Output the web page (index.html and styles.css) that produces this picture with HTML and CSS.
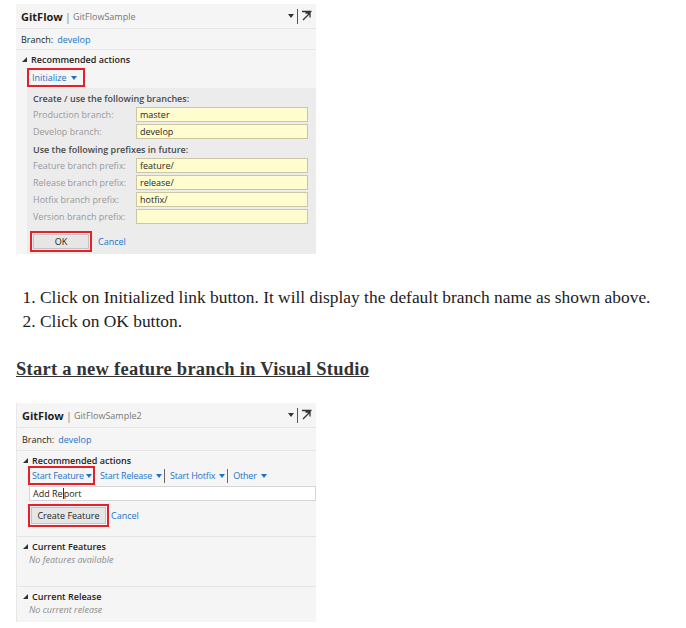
FILE: index.html
```html
<!DOCTYPE html>
<html>
<head>
<meta charset="utf-8">
<title>GitFlow</title>
<link rel="stylesheet" href="styles.css">
</head>
<body>
<div class="panel p1">
  <div class="hdr">
    <span class="title">GitFlow</span><span class="pipe">|</span><span class="repo">GitFlowSample</span>
    <span class="tools">
      <svg class="dd" width="6" height="4" viewBox="0 0 6 4"><polygon points="0,0 6,0 3,4" fill="#333"/></svg>
      <span class="vsep"></span>
      <svg class="pop" width="11" height="11" viewBox="0 0 11 11"><path d="M1 1.5H10.5M2 10L9 3M4.5 3H9V7.5" stroke="#333" stroke-width="1.3" fill="none"/></svg>
    </span>
  </div>
  <div class="branch">Branch:<span class="link bname">develop</span></div>
  <div class="sec-title rec1"><svg class="exp" width="5" height="5" viewBox="0 0 5 5"><polygon points="5,0 5,5 0,5" fill="#333"/></svg>Recommended actions</div>
  <div class="actions">
    <span class="hl init"><span class="link">Initialize</span><svg class="caret" width="6" height="4" viewBox="0 0 6 4"><polygon points="0,0 6,0 3,4" fill="#1e73c6"/></svg></span>
  </div>
  <div class="form">
    <div class="ftitle">Create / use the following branches:</div>
    <div class="frow"><span class="lbl">Production branch:</span><span class="inp">master</span></div>
    <div class="frow"><span class="lbl">Develop branch:</span><span class="inp">develop</span></div>
    <div class="ftitle">Use the following prefixes in future:</div>
    <div class="frow"><span class="lbl">Feature branch prefix:</span><span class="inp">feature/</span></div>
    <div class="frow"><span class="lbl">Release branch prefix:</span><span class="inp">release/</span></div>
    <div class="frow"><span class="lbl">Hotfix branch prefix:</span><span class="inp">hotfix/</span></div>
    <div class="frow"><span class="lbl">Version branch prefix:</span><span class="inp"></span></div>
    <div class="buttons">
      <span class="hl okbox"><span class="btn">OK</span></span>
      <span class="link cancel1">Cancel</span>
    </div>
  </div>
</div>

<ol class="steps">
  <li>Click on Initialized link button. It will display the default branch name as shown above.</li>
  <li>Click on OK button.</li>
</ol>

<h3 class="heading">Start a new feature branch in Visual Studio</h3>

<div class="panel p2">
  <div class="hdr">
    <span class="title">GitFlow</span><span class="pipe">|</span><span class="repo">GitFlowSample2</span>
    <span class="tools">
      <svg class="dd" width="6" height="4" viewBox="0 0 6 4"><polygon points="0,0 6,0 3,4" fill="#333"/></svg>
      <span class="vsep"></span>
      <svg class="pop" width="11" height="11" viewBox="0 0 11 11"><path d="M1 1.5H10.5M2 10L9 3M4.5 3H9V7.5" stroke="#333" stroke-width="1.3" fill="none"/></svg>
    </span>
  </div>
  <div class="branch branch2">Branch:<span class="link bname">develop</span></div>
  <div class="sec-title rec2"><svg class="exp" width="5" height="5" viewBox="0 0 5 5"><polygon points="5,0 5,5 0,5" fill="#333"/></svg>Recommended actions</div>
  <div class="actions2">
    <span class="hl sf"><span class="link">Start Feature</span><svg class="caret" width="6" height="4" viewBox="0 0 6 4"><polygon points="0,0 6,0 3,4" fill="#1e73c6"/></svg></span>
    <span class="act"><span class="link">Start Release</span><svg class="caret" width="6" height="4" viewBox="0 0 6 4"><polygon points="0,0 6,0 3,4" fill="#1e73c6"/></svg></span>
    <span class="asep"></span>
    <span class="act"><span class="link">Start Hotfix</span><svg class="caret" width="6" height="4" viewBox="0 0 6 4"><polygon points="0,0 6,0 3,4" fill="#1e73c6"/></svg></span>
    <span class="asep"></span>
    <span class="act"><span class="link">Other</span><svg class="caret" width="6" height="4" viewBox="0 0 6 4"><polygon points="0,0 6,0 3,4" fill="#1e73c6"/></svg></span>
  </div>
  <div class="namebox">Add Re<span class="cursor"></span>port</div>
  <div class="buttons2">
    <span class="hl cfbox"><span class="btn">Create Feature</span></span>
    <span class="link cancel2">Cancel</span>
  </div>
  <div class="group">
    <div class="gtitle"><svg class="exp" width="5" height="5" viewBox="0 0 5 5"><polygon points="5,0 5,5 0,5" fill="#333"/></svg>Current Features</div>
    <div class="empty">No features available</div>
  </div>
  <div class="group">
    <div class="gtitle"><svg class="exp" width="5" height="5" viewBox="0 0 5 5"><polygon points="5,0 5,5 0,5" fill="#333"/></svg>Current Release</div>
    <div class="empty">No current release</div>
  </div>
</div>
</body>
</html>
```

FILE: styles.css
```css
html, body {
  margin: 0;
  padding: 0;
  background: #ffffff;
}

body {
  font-family: "Liberation Serif", "DejaVu Serif", serif;
  color: #222;
}

.panel {
  margin-left: 16px;
  width: 300px;
  background: #f5f5f5;
  font-family: "Open Sans", "Noto Sans", sans-serif;
  font-size: 9px;
  color: #1e1e1e;
  box-sizing: border-box;
  overflow: hidden;
  white-space: nowrap;
}

.p1 {
  margin-top: 4px;
  height: 250px;
}

.p2 {
  margin-top: 22px;
  height: 219px;
  border-left: 1px solid #e8e8e8;
}

.hdr {
  height: 24px;
  display: flex;
  align-items: center;
  padding: 0 4px 0 5px;
  border-bottom: 1px solid #e6e6e6;
}

.title {
  font-weight: 700;
  font-size: 11px;
  color: #1e1e1e;
}

.pipe {
  color: #8a8a8a;
  font-size: 11.5px;
  margin: 0 2px 0 2px;
}

.repo {
  color: #777;
  font-size: 9px;
}

.tools {
  margin-left: auto;
  display: flex;
  align-items: center;
  gap: 3px;
}

.vsep {
  width: 1px;
  height: 15px;
  background: #555;
}

.pop {
  margin-top: -2px;
}

.branch {
  height: 20px;
  display: flex;
  align-items: center;
  padding-left: 5px;
  border-bottom: 1px solid #e6e6e6;
}

.branch2 {
  height: 22px;
}

.bname {
  margin-left: 4px;
}

.link {
  color: #1e73c6;
}

.sec-title,
.gtitle {
  display: flex;
  align-items: center;
  padding-left: 6px;
  font-weight: 600;
  color: #1e1e1e;
}

.rec1 {
  height: 17px;
  padding-top: 1px;
}

.rec2 {
  height: 11px;
  margin-top: 4px;
}

.exp {
  margin-right: 4px;
}

.hl {
  display: inline-flex;
  align-items: center;
  flex-shrink: 0;
  box-sizing: border-box;
  border: 2px solid #e3212a;
}

.caret {
  margin-left: 4px;
}

.actions {
  padding-left: 11px;
  height: 20px;
}

.init {
  height: 19px;
  width: 58px;
  padding-left: 3px;
}

.form {
  margin-left: 11px;
  height: 166px;
  background: #ececec;
  padding: 2px 0 0 6px;
  box-sizing: border-box;
}

.ftitle {
  height: 17px;
  display: flex;
  align-items: center;
  font-weight: 600;
  color: #4a4a4a;
}

.frow {
  display: flex;
  align-items: center;
  height: 15px;
  margin-bottom: 2px;
}

.lbl {
  width: 103px;
  color: #999;
}

.inp {
  width: 172px;
  height: 15px;
  box-sizing: border-box;
  border: 1px solid #cbc7a5;
  background: #fffdd0;
  padding-left: 3px;
  display: flex;
  align-items: center;
  color: #1e1e1e;
}

.buttons {
  display: flex;
  align-items: center;
  margin-top: 7px;
  margin-left: -3px;
}

.okbox {
  width: 62px;
  height: 21px;
  padding: 1px;
}

.btn {
  flex: 1;
  height: 100%;
  display: flex;
  align-items: center;
  justify-content: center;
  background: #e6e6e6;
  border: 1px solid #c4c4c4;
  box-sizing: border-box;
  color: #1e1e1e;
}

.cancel1 {
  margin-left: 6px;
}

.steps {
  margin: 31px 0 0 0;
  padding-left: 40px;
  font-size: 17.4px;
  line-height: 24px;
  color: #222;
}

.heading {
  margin: 24px 0 0 16px;
  font-size: 18.5px;
  letter-spacing: 0.25px;
  line-height: 24px;
  font-weight: 700;
  text-decoration: underline;
  color: #333;
}

.actions2 {
  display: flex;
  align-items: center;
  padding-left: 11px;
  height: 19px;
  letter-spacing: -0.2px;
}

.sf .caret {
  margin-left: 2px;
}

.sf {
  height: 19px;
  padding: 0 1px 0 2px;
}

.act {
  display: inline-flex;
  align-items: center;
  flex-shrink: 0;
  padding: 0 2px 0 5px;
}

.act .caret {
  margin-left: 4px;
}

.asep {
  width: 1px;
  height: 14px;
  background: #666;
  flex-shrink: 0;
}

.namebox {
  margin: 1px 0 0 12px;
  width: 287px;
  height: 15px;
  box-sizing: border-box;
  background: #fff;
  border: 1px solid #d6d6d6;
  padding-left: 3px;
  display: flex;
  align-items: center;
}

.cursor {
  width: 1px;
  height: 11px;
  background: #333;
}

.buttons2 {
  display: flex;
  align-items: center;
  margin: 3px 0 0 11px;
  height: 23px;
}

.cfbox {
  width: 81px;
  height: 23px;
  padding: 1px;
}

.cancel2 {
  margin-left: 2px;
}

.group {
  border-top: 1px solid #e4e4e4;
  margin-top: 9px;
  height: 50px;
  padding-top: 2px;
  box-sizing: border-box;
}

.group + .group {
  margin-top: 0;
}

.gtitle {
  height: 14px;
}

.empty {
  padding-left: 12px;
  height: 13px;
  line-height: 13px;
  font-style: italic;
  color: #8c8c8c;
}
```
